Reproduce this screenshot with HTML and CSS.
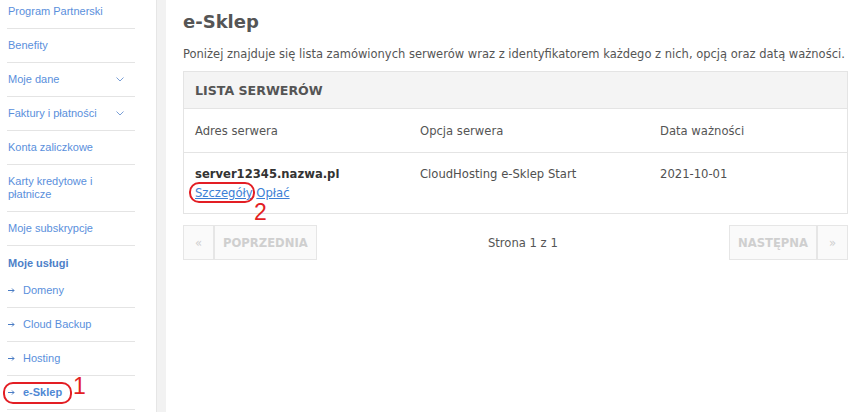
FILE: index.html
```html
<!DOCTYPE html>
<html lang="pl">
<head>
<meta charset="utf-8">
<title>e-Sklep</title>
<link rel="stylesheet" href="styles.css">
</head>
<body>
<div class="layout">
  <aside class="sidebar">
    <ul class="nav">
      <li class="nav-item"><a href="#">Program Partnerski</a></li>
      <li class="nav-item"><a href="#">Benefity</a></li>
      <li class="nav-item"><a href="#">Moje dane</a><svg class="chev" width="8" height="5" viewBox="0 0 8 5"><path d="M0.5 0.5 L4 4 L7.5 0.5" fill="none" stroke="#7a9fd6" stroke-width="1"/></svg></li>
      <li class="nav-item"><a href="#">Faktury i płatności</a><svg class="chev" width="8" height="5" viewBox="0 0 8 5"><path d="M0.5 0.5 L4 4 L7.5 0.5" fill="none" stroke="#7a9fd6" stroke-width="1"/></svg></li>
      <li class="nav-item"><a href="#">Konta zaliczkowe</a></li>
      <li class="nav-item"><a href="#">Karty kredytowe i<br>płatnicze</a></li>
      <li class="nav-item"><a href="#">Moje subskrypcje</a></li>
      <li class="nav-head">Moje usługi</li>
      <li class="nav-item sub"><svg class="arr" width="7" height="5" viewBox="0 0 7 5"><path d="M0 2.5 H6 M4 0.5 L6 2.5 L4 4.5" fill="none" stroke="#4a7cc4" stroke-width="1"/></svg><a href="#">Domeny</a></li>
      <li class="nav-item sub"><svg class="arr" width="7" height="5" viewBox="0 0 7 5"><path d="M0 2.5 H6 M4 0.5 L6 2.5 L4 4.5" fill="none" stroke="#4a7cc4" stroke-width="1"/></svg><a href="#">Cloud Backup</a></li>
      <li class="nav-item sub"><svg class="arr" width="7" height="5" viewBox="0 0 7 5"><path d="M0 2.5 H6 M4 0.5 L6 2.5 L4 4.5" fill="none" stroke="#4a7cc4" stroke-width="1"/></svg><a href="#">Hosting</a></li>
      <li class="nav-item sub active"><svg class="arr" width="7" height="5" viewBox="0 0 7 5"><path d="M0 2.5 H6 M4 0.5 L6 2.5 L4 4.5" fill="none" stroke="#4a7cc4" stroke-width="1"/></svg><a href="#">e-Sklep</a>
        <span class="mark mark-1"></span><span class="num num-1">1</span></li>
    </ul>
  </aside>
  <div class="strip"></div>
  <main class="main">
    <h1 class="title">e-Sklep</h1>
    <p class="desc">Poniżej znajduje się lista zamówionych serwerów wraz z identyfikatorem każdego z nich, opcją oraz datą ważności.</p>
    <section class="box">
      <div class="box-head">LISTA SERWERÓW</div>
      <div class="row row-head">
        <div class="c1">Adres serwera</div>
        <div class="c2">Opcja serwera</div>
        <div class="c3">Data ważności</div>
      </div>
      <div class="row row-data">
        <div class="c1">
          <div class="srv">server12345.nazwa.pl</div>
          <div class="links"><a href="#" class="lnk">Szczegóły</a> <a href="#" class="lnk">Opłać</a>
            <span class="mark mark-2"></span><span class="num num-2">2</span></div>
        </div>
        <div class="c2">CloudHosting e-Sklep Start</div>
        <div class="c3">2021-10-01</div>
      </div>
    </section>
    <nav class="pager">
      <div class="pg-group">
        <span class="pg-btn pg-arrow">«</span><span class="pg-btn">POPRZEDNIA</span>
      </div>
      <div class="pg-info">Strona 1 z 1</div>
      <div class="pg-group">
        <span class="pg-btn">NASTĘPNA</span><span class="pg-btn pg-arrow">»</span>
      </div>
    </nav>
  </main>
</div>
</body>
</html>
```
FILE: styles.css
```css
* { box-sizing: border-box; }
html, body { margin: 0; padding: 0; background: #fff; }
body { font-family: "DejaVu Sans", Verdana, sans-serif; color: #505050; overflow: hidden; }

.layout { display: flex; height: 412px; }

.sidebar { width: 156px; padding-left: 7px; flex: none; }
.nav { list-style: none; margin: -5px 0 0 0; padding: 0; width: 128px; font-family: "Liberation Sans", Arial, sans-serif; font-size: 11px; }
.nav-item { position: relative; display: flex; align-items: center; padding: 10px 8px 10px 1px; line-height: 13px; border-bottom: 1px solid #e4e4e4; }
.nav-item a { color: #5a8fdc; text-decoration: none; }
.chev { margin-left: auto; margin-right: 3px; }
.nav-head { padding: 11px 1px 4px; line-height: 13px; font-weight: bold; color: #4d80c8; }
.nav-item.sub a { margin-left: 8px; }
.arr { flex: none; }
.nav-item.active a { font-weight: bold; color: #4f88d4; }

.strip { width: 10px; flex: none; background: #f2f2f2; border-left: 1px solid #e6e6e6; }

.main { flex: 1; min-width: 0; padding: 10px 7px 0 17px; }
.title { margin: 0; font-size: 18px; line-height: 24px; font-weight: bold; color: #555; }
.desc { margin: 12px 0 9px; font-size: 11.5px; line-height: 16px; color: #555; white-space: nowrap; }

.box { border: 1px solid #e4e4e4; }
.box-head { height: 37px; display: flex; align-items: center; padding-left: 11px; background: #f4f4f4; border-bottom: 1px solid #e4e4e4; font-size: 12.6px; font-weight: bold; color: #555; }
.row { display: flex; padding-left: 11px; font-size: 11.6px; }
.row-head { height: 44px; align-items: center; border-bottom: 1px solid #e4e4e4; color: #555; padding-top: 1px; }
.row-data { padding-top: 12px; padding-bottom: 10px; line-height: 19px; color: #505050; align-items: flex-start; }
.c1 { width: 225px; }
.c2 { width: 240px; }
.c3 { flex: 1; }
.srv { font-weight: bold; color: #333; }
.links { position: relative; }
.lnk { color: #3d7fd6; text-decoration: underline; }

.pager { display: flex; align-items: center; margin-top: 11px; height: 35px; }
.pg-group { display: flex; height: 35px; }
.pg-btn { display: flex; align-items: center; justify-content: center; height: 35px; padding: 0 8px; border: 1px solid #e6e6e6; background: #fafafa; color: #cfcfcf; font-size: 11.6px; font-weight: bold; }
.pg-arrow { width: 31px; padding: 0; font-weight: normal; }
.pg-info { flex: 1; text-align: center; font-size: 11.6px; color: #555; }

.mark { position: absolute; border: 2px solid #e31e24; border-radius: 10px; pointer-events: none; }
.num { position: absolute; color: #e31e24; font-family: "Liberation Sans", Arial, sans-serif; font-size: 23px; line-height: 23px; }
.mark-1 { left: -4px; top: 6px; width: 69px; height: 22px; }
.num-1 { left: 66px; top: -1px; }
.mark-2 { left: -6px; top: -2px; width: 66px; height: 21px; }
.num-2 { left: 59px; top: 17px; }
```
